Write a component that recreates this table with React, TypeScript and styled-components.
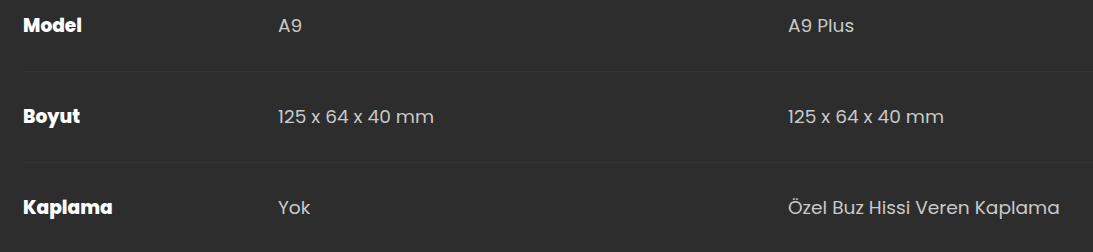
import React from 'react';
import styled, { createGlobalStyle } from 'styled-components';

const GlobalStyle = createGlobalStyle`
  html, body {
    margin: 0;
    padding: 0;
    background: #2d2d2d;
    overflow: hidden;
  }
  body {
    font-family: Poppins, Inter, "Noto Sans", sans-serif;
  }
`;

const Wrapper = styled.div`
  padding-left: 23px;
  margin-top: -20px;
`;

const SpecTable = styled.table`
  border-collapse: collapse;
  width: 1275px;
  table-layout: fixed;
`;

const SpecRow = styled.tr`
  height: 91px;
  border-bottom: 1px solid #363636;
`;

const LabelCell = styled.td`
  width: 255px;
  padding: 0;
  vertical-align: middle;
  font-size: 18.6px;
  font-weight: 800;
  color: #ffffff;
`;

const ValueCell = styled.td`
  width: 510px;
  padding: 0;
  vertical-align: middle;
  font-size: 18.6px;
  font-weight: 400;
  color: #c9c9c9;
`;

const specs = [
  { label: 'Model', a9: 'A9', plus: 'A9 Plus' },
  { label: 'Boyut', a9: '125 x 64 x 40 mm', plus: '125 x 64 x 40 mm' },
  { label: 'Kaplama', a9: 'Yok', plus: 'Özel Buz Hissi Veren Kaplama' },
];

const App = () => {
  return (
    <>
      <GlobalStyle />
      <Wrapper>
        <SpecTable>
          <tbody>
            {specs.map(item => (
              <SpecRow key={item.label}>
                <LabelCell>{item.label}</LabelCell>
                <ValueCell>{item.a9}</ValueCell>
                <ValueCell>{item.plus}</ValueCell>
              </SpecRow>
            ))}
          </tbody>
        </SpecTable>
      </Wrapper>
    </>
  );
};

export default App;
